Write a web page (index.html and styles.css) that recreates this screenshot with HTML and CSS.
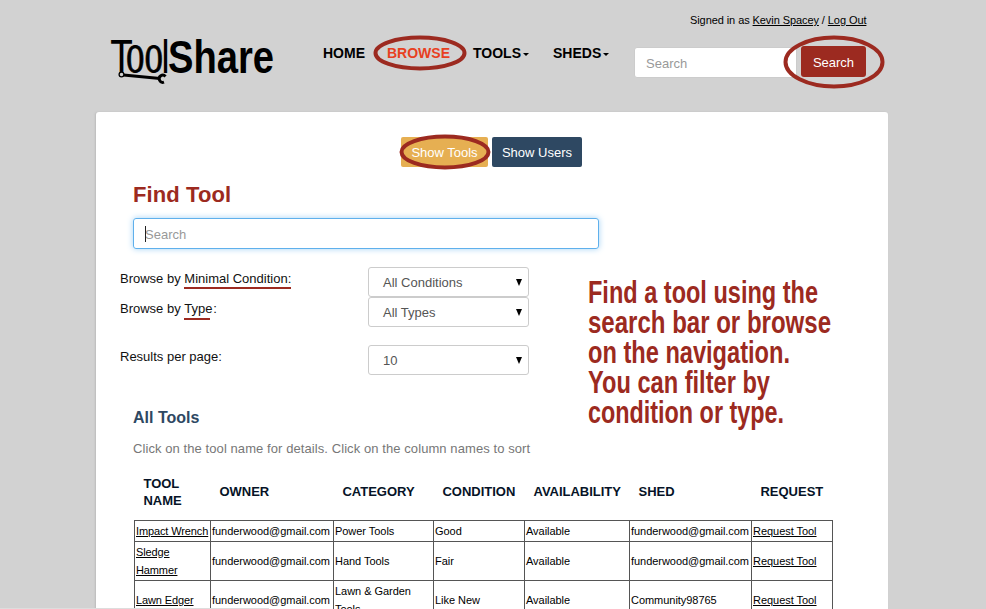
FILE: index.html
```html
<!DOCTYPE html>
<html lang="en">
<head>
<meta charset="utf-8">
<title>ToolShare</title>
<link rel="stylesheet" href="styles.css">
</head>
<body>
<header class="header">
  <a class="logo" href="#">
    <svg width="164" height="50" viewBox="0 0 164 50">
      <text class="logo-t" x="0.5" y="34.5" textLength="22" lengthAdjust="spacingAndGlyphs">T</text>
      <text class="logo-oo" x="16" y="34" textLength="37" lengthAdjust="spacingAndGlyphs">oo</text>
      <text class="logo-l" x="51.5" y="34.5" textLength="8" lengthAdjust="spacingAndGlyphs">l</text>
      <text class="logo-share" x="58" y="34.5" textLength="106" lengthAdjust="spacingAndGlyphs">Share</text>
      <path class="wrench-shaft" d="M13.5 37 50 40.5"/>
      <circle class="wrench-ring" cx="11.5" cy="36.5" r="2.4"/>
      <path class="wrench-jaw" d="M55.5 38.4A3.6 3.6 0 1 0 54 44.2"/>
    </svg>
  </a>
  <nav class="nav">
    <a class="nav-home">HOME</a>
    <a class="nav-browse">BROWSE<svg class="ring ring-browse" viewBox="0 0 94 36"><ellipse cx="47" cy="18" rx="44.5" ry="15.5"/></svg></a>
    <a class="nav-tools">TOOLS<i class="caret"></i></a>
    <a class="nav-sheds">SHEDS<i class="caret"></i></a>
  </nav>
  <div class="account">
    <p class="signed">Signed in as <a>Kevin Spacey</a> / <a>Log Out</a></p>
    <form class="search">
      <span class="search-input">Search</span>
      <span class="search-button">Search<svg class="ring ring-search" viewBox="0 0 102 54"><ellipse cx="51" cy="27" rx="48.5" ry="24.5"/></svg></span>
    </form>
  </div>
</header>
<main class="panel">
  <div class="switch">
    <span class="btn btn-tools"><b>Show Tools</b><svg class="ring ring-tools" viewBox="0 0 92 36"><ellipse cx="46" cy="18" rx="43.5" ry="15.5"/></svg></span>
    <span class="btn btn-users"><b>Show Users</b></span>
  </div>
  <h1>Find Tool</h1>
  <div class="find"><i class="cursor"></i>Search</div>
  <div class="filters">
    <div class="options">
      <div class="option"><span class="label">Browse by <u>Minimal Condition:</u></span><span class="select">All Conditions<i></i></span></div>
      <div class="option"><span class="label">Browse by <u class="type">Type</u>:</span><span class="select">All Types<i></i></span></div>
      <div class="option option-page"><span class="label">Results per page:</span><span class="select">10<i></i></span></div>
    </div>
    <svg class="note" width="250" height="160">
      <text x="0" y="27" textLength="230" lengthAdjust="spacingAndGlyphs">Find a tool using the</text>
      <text x="0" y="57" textLength="243" lengthAdjust="spacingAndGlyphs">search bar or browse</text>
      <text x="0" y="87" textLength="202" lengthAdjust="spacingAndGlyphs">on the navigation.</text>
      <text x="0" y="117" textLength="182" lengthAdjust="spacingAndGlyphs">You can filter by</text>
      <text x="0" y="147" textLength="196" lengthAdjust="spacingAndGlyphs">condition or type.</text>
    </svg>
  </div>
  <h2>All Tools</h2>
  <p class="hint">Click on the tool name for details. Click on the column names to sort</p>
  <table>
    <colgroup><col class="c1"><col class="c2"><col class="c3"><col class="c4"><col class="c5"><col class="c6"><col class="c7"></colgroup>
    <thead><tr><th>TOOL NAME</th><th>OWNER</th><th>CATEGORY</th><th>CONDITION</th><th>AVAILABILITY</th><th>SHED</th><th>REQUEST</th></tr></thead>
    <tbody>
      <tr><td><a>Impact Wrench</a></td><td>funderwood@gmail.com</td><td>Power Tools</td><td>Good</td><td>Available</td><td>funderwood@gmail.com</td><td><a>Request Tool</a></td></tr>
      <tr><td><a>Sledge<br>Hammer</a></td><td>funderwood@gmail.com</td><td>Hand Tools</td><td>Fair</td><td>Available</td><td>funderwood@gmail.com</td><td><a>Request Tool</a></td></tr>
      <tr><td><a>Lawn Edger</a></td><td>funderwood@gmail.com</td><td>Lawn &amp; Garden<br>Tools</td><td>Like New</td><td>Available</td><td>Community98765</td><td><a>Request Tool</a></td></tr>
    </tbody>
  </table>
</main>
<div class="status"></div>
</body>
</html>
```
FILE: styles.css
```css
* { box-sizing: border-box; }
html { height: 609px; overflow: hidden; }
body { margin: 0; height: 609px; overflow: hidden; background: #d2d2d2; color: #000; font-family: "Liberation Sans", Arial, sans-serif; font-size: 11px; }
p, h1, h2 { margin: 0; }
.header { width: 792px; height: 112px; margin-left: 96px; padding-left: 14px; display: flex; }
.logo { width: 164px; margin-top: 38px; }
.logo svg { display: block; overflow: visible; }
.logo-t { font-family: Lato, sans-serif; font-size: 46px; }
.logo-oo { font-family: "Liberation Serif", serif; font-size: 56px; stroke: #000; stroke-width: 0.8; }
.logo-l { font-size: 46px; }
.logo-share { font-size: 46px; font-weight: bold; }
.wrench-shaft { stroke: #000; stroke-width: 3; }
.wrench-ring { fill: #d2d2d2; stroke: #000; stroke-width: 1.3; }
.wrench-jaw { fill: none; stroke: #000; stroke-width: 3; }
.nav { width: 361px; margin-top: 44px; padding-left: 49px; display: flex; font-size: 14px; font-weight: bold; line-height: 18px; white-space: nowrap; }
.nav a { position: relative; }
.nav-home { width: 64px; }
.nav-browse { width: 86px; color: #e8401f; }
.nav-tools { width: 80px; }
.caret { display: inline-block; margin-left: 2px; vertical-align: 2px; border: 3px solid transparent; border-top-color: #000; border-bottom: 0; }
.ring { position: absolute; overflow: visible; fill: none; stroke: #9c2a20; stroke-width: 4; }
.ring-browse { left: -14.5px; top: -9.5px; width: 94px; height: 36px; }
.signed { margin: 13px 0 0 55px; line-height: 14px; letter-spacing: -0.08px; white-space: nowrap; }
.signed a, td a { text-decoration: underline; }
.search { margin-top: 19px; margin-left: -1px; display: flex; width: 232px; font-size: 13px; }
.search-input { width: 163px; height: 31px; margin-top: 1px; padding: 0 11px; background: #fff; border: 1px solid #ccc; border-radius: 3px; line-height: 31px; color: #999; }
.search-button { position: relative; width: 65px; height: 31px; margin-left: 4px; border-radius: 3px; background: #9c2a20; color: #fff; line-height: 33px; text-align: center; }
.ring-search { left: -18.5px; top: -11.5px; width: 102px; height: 54px; }
.panel { width: 792px; height: 520px; margin-left: 96px; padding: 25px 0 0 37px; overflow: hidden; background: #fff; border-radius: 3px 3px 0 0; box-shadow: -1px 0 2px #bbb; }
.switch { display: flex; gap: 4px; margin-left: 268px; }
.btn { position: relative; height: 30px; width: 90px; background: #2e4862; color: #fff; border-radius: 2px; font-size: 13px; line-height: 31px; text-align: center; }
.btn b { font-weight: normal; }
.btn-tools { width: 87px; background: #e6af52; }
.ring-tools { left: -2.5px; top: -3.5px; width: 92px; height: 36px; }
h1 { margin-top: 14px; color: #9c2a20; font-size: 22px; line-height: 28px; letter-spacing: 0.1px; }
.find { position: relative; width: 466px; height: 31px; margin-top: 9px; padding-left: 11px; border: 1px solid #5fb0ec; border-radius: 3px; box-shadow: 0 0 6px #a5d3f5; color: #999; font-size: 13px; line-height: 31px; }
.cursor { position: absolute; left: 11px; top: 7px; width: 1px; height: 16px; background: #222; }
.filters { display: flex; margin: 18px 0 0 -13px; }
.options { width: 468px; }
.option { display: flex; height: 30px; font-size: 13px; }
.option-page { margin-top: 18px; }
.label { width: 248px; line-height: 23px; color: #111; }
.label u { display: inline-block; height: 22px; text-decoration: none; border-bottom: 2px solid #9c2a20; line-height: 23px; }
.label .type { width: 26px; height: 23px; margin-right: 3px; }
.select { position: relative; width: 161px; height: 30px; padding-left: 14px; border: 1px solid #ccc; border-radius: 3px; color: #555; line-height: 30px; }
.select i { position: absolute; right: 6px; top: 11px; border: 3px solid transparent; border-top: 7px solid #000; border-bottom: 0; }
.note { font-size: 31px; font-weight: bold; fill: #9c2a20; margin-top: 9px; overflow: visible; }
h2 { height: 20px; margin-top: -28px; color: #2e4862; font-size: 16px; line-height: 20px; }
.hint { margin-top: 12px; color: #777; font-size: 13px; line-height: 18px; letter-spacing: 0.08px; }
table { width: 699px; margin: 14px 0 0 1px; border-collapse: collapse; table-layout: fixed; }
.c1 { width: 76px; } .c2 { width: 123px; } .c3 { width: 100px; } .c4 { width: 91px; } .c5 { width: 105px; } .c6 { width: 122px; } .c7 { width: 81px; }
th { height: 48px; padding: 0 0 8px 9px; text-align: left; vertical-align: middle; color: #061327; font-size: 13px; line-height: 17px; letter-spacing: -0.02px; white-space: nowrap; }
th:first-child { white-space: normal; }
td { padding: 1px 0 1px 1px; border: 1px solid #555; font-size: 11px; line-height: 18px; letter-spacing: -0.04px; white-space: nowrap; }
td:first-child { letter-spacing: -0.12px; }
.status { position: absolute; left: 0; top: 608px; width: 269px; height: 1px; background: #ddd; }
```
